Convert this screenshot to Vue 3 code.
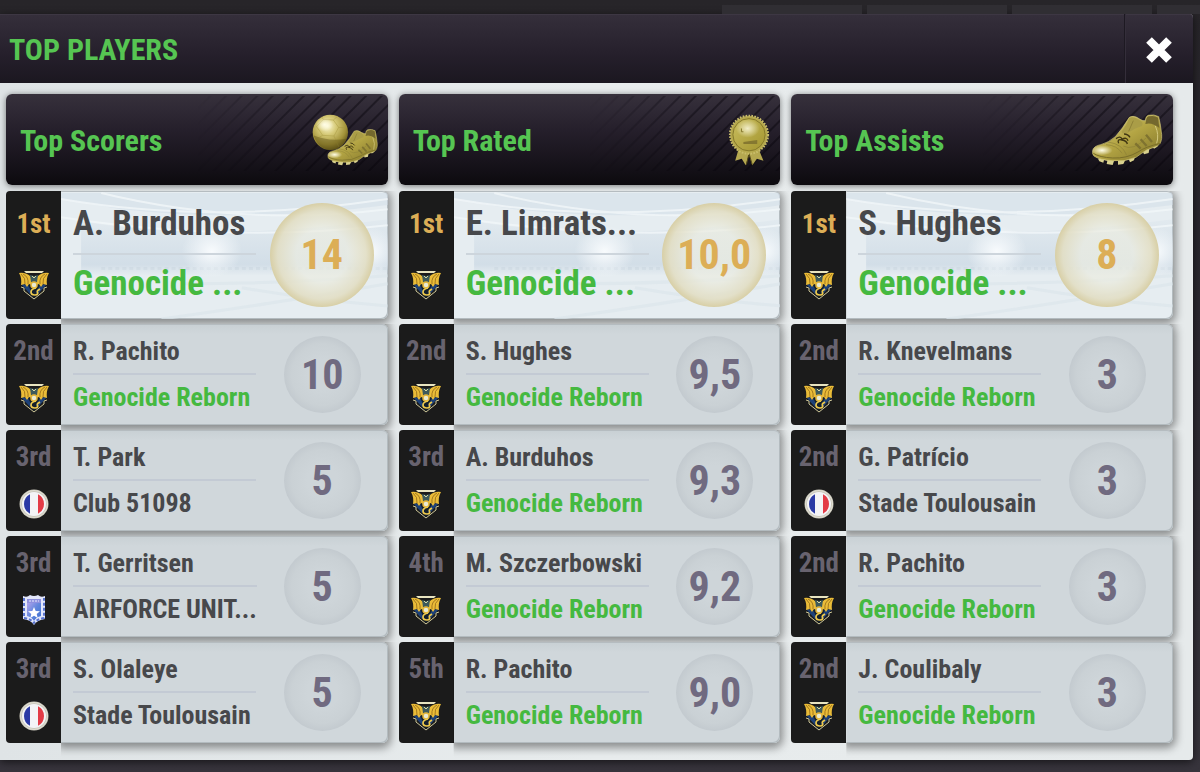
<script setup>
const reborn = 'Genocide Reborn'

const boards = [
  {
    title: 'Top Scorers',
    icon: 'ball',
    players: [
      { rank: '1st', name: 'A. Burduhos', club: 'Genocide ...', crest: 'dragon', own: true, value: '14' },
      { rank: '2nd', name: 'R. Pachito', club: reborn, crest: 'dragon', own: true, value: '10' },
      { rank: '3rd', name: 'T. Park', club: 'Club 51098', crest: 'france', value: '5' },
      { rank: '3rd', name: 'T. Gerritsen', club: 'AIRFORCE UNIT...', crest: 'star', value: '5' },
      { rank: '3rd', name: 'S. Olaleye', club: 'Stade Toulousain', crest: 'france', value: '5' }
    ]
  },
  {
    title: 'Top Rated',
    icon: 'medal',
    players: [
      { rank: '1st', name: 'E. Limrats...', club: 'Genocide ...', crest: 'dragon', own: true, value: '10,0' },
      { rank: '2nd', name: 'S. Hughes', club: reborn, crest: 'dragon', own: true, value: '9,5' },
      { rank: '3rd', name: 'A. Burduhos', club: reborn, crest: 'dragon', own: true, value: '9,3' },
      { rank: '4th', name: 'M. Szczerbowski', club: reborn, crest: 'dragon', own: true, value: '9,2' },
      { rank: '5th', name: 'R. Pachito', club: reborn, crest: 'dragon', own: true, value: '9,0' }
    ]
  },
  {
    title: 'Top Assists',
    icon: 'boot',
    players: [
      { rank: '1st', name: 'S. Hughes', club: 'Genocide ...', crest: 'dragon', own: true, value: '8' },
      { rank: '2nd', name: 'R. Knevelmans', club: reborn, crest: 'dragon', own: true, value: '3' },
      { rank: '2nd', name: 'G. Patrício', club: 'Stade Toulousain', crest: 'france', value: '3' },
      { rank: '2nd', name: 'R. Pachito', club: reborn, crest: 'dragon', own: true, value: '3' },
      { rank: '2nd', name: 'J. Coulibaly', club: reborn, crest: 'dragon', own: true, value: '3' }
    ]
  }
]
</script>

<template>
  <div class="page">
    <svg class="defs" aria-hidden="true">
      <defs>
        <linearGradient id="gold" x1="0" y1="0" x2="1" y2="1">
          <stop offset="0" stop-color="#d8cf83" />
          <stop offset="0.5" stop-color="#b3a443" />
          <stop offset="1" stop-color="#7d7128" />
        </linearGradient>
        <linearGradient id="medalGold" x1="0" y1="0" x2="1" y2="1">
          <stop offset="0" stop-color="#c9bd5e" />
          <stop offset="1" stop-color="#a3952f" />
        </linearGradient>
        <radialGradient id="ballGold" cx="0.42" cy="0.32" r="0.7">
          <stop offset="0" stop-color="#fbf7d2" />
          <stop offset="0.35" stop-color="#d6ca78" />
          <stop offset="0.75" stop-color="#a29238" />
          <stop offset="1" stop-color="#5f5418" />
        </radialGradient>
        <radialGradient id="shine">
          <stop offset="0" stop-color="#fffde6" />
          <stop offset="1" stop-color="#fffde6" stop-opacity="0" />
        </radialGradient>
        <radialGradient id="floodlight">
          <stop offset="0" stop-color="#f8fbfd" />
          <stop offset="1" stop-color="#f8fbfd" stop-opacity="0" />
        </radialGradient>
        <linearGradient id="stand" x1="0" y1="0" x2="0" y2="1">
          <stop offset="0" stop-color="#cddae5" stop-opacity="0.2" />
          <stop offset="0.8" stop-color="#cddae5" />
          <stop offset="1" stop-color="#cddae5" stop-opacity="0" />
        </linearGradient>
        <linearGradient id="starFill" x1="0" y1="0" x2="1" y2="1">
          <stop offset="0" stop-color="#b5a4ee" />
          <stop offset="0.5" stop-color="#5f86dc" />
          <stop offset="1" stop-color="#3f6fd0" />
        </linearGradient>

        <symbol id="boot" viewBox="64 54 214 156">
          <path d="M84 188l4 8 12 4 2-8 10 2-2 10 18 3 4-12 12 0 0 11 16-2 6-12 10-3 4 10 12-6 4-14 22-14 4 10 14-4 2-12 10-6 4 5 10-6 4-14z" fill="#d9d18f" />
          <path d="M68 165Q70 150 92 146Q116 140 136 122Q158 98 178 64Q192 56 210 70Q220 76 226 74Q227 60 235 58Q252 54 266 62Q272 86 275 116Q277 140 262 150L230 162Q214 172 198 184Q166 198 128 194Q88 192 72 180Q66 174 68 165Z" fill="url(#gold)" stroke="#d5ca7d" stroke-width="2" />
          <path d="M178 66Q190 60 208 72Q222 80 216 90Q196 96 172 112Q158 116 154 108Q170 88 178 66Z" fill="#aa9d47" />
          <path d="M228 75Q229 61 238 61Q252 57 264 65L268 96Q246 78 226 84Z" fill="#74682e" />
          <path d="M190 74l-14 32" stroke="#8f8237" stroke-width="3" />
          <path d="M70 172Q88 184 128 186Q170 188 204 168Q226 152 272 142" fill="none" stroke="#7a6e2a" stroke-width="3" />
          <path d="M108 146Q142 148 156 172M114 138Q158 144 170 178M160 150Q190 166 228 126" fill="none" stroke="#8c8036" stroke-width="2" />
          <path d="M138 128q14-10 18 2 14-8 18 4M146 142q-6-14 10-10 14 2 16 12M162 114q12 0 18 10" fill="none" stroke="#3f3613" stroke-width="4" />
          <path d="M196 142l16 16M212 130l18 20M228 116l18 22" stroke="#7f7330" stroke-width="7" />
          <path d="M256 90q12 26 4 52" fill="none" stroke="#d3c97e" stroke-width="3" />
          <ellipse cx="96" cy="163" rx="32" ry="15" fill="url(#shine)" />
        </symbol>

        <symbol id="dragon" viewBox="0 0 30 30">
          <path d="M5 1h20l-2 2H7z" fill="#e8e4c0" />
          <path d="M2 13l13 15 13-15z" fill="#14202c" />
          <path d="M2 14l7 1 4 8-2 1zM28 14l-7 1-4 8 2 1z" fill="#1d4178" />
          <path d="M2 17l3 1v3l10 8 10-8v-3l3-1" fill="none" stroke="#cfc899" stroke-width="1" />
          <path d="M0 3Q7 2 12 7l1 8-3-1-2 3-2-3-4 1Q3 8 0 3zM30 3Q23 2 18 7l-1 8 3-1 2 3 2-3 4 1Q27 8 30 3z" fill="#eabc38" />
          <path d="M2 4q5 4 4 10M4 4q6 3 5 10M28 4q-5 4-4 10M26 4q-6 3-5 10" fill="none" stroke="#8f6718" stroke-width="0.8" />
          <path d="M11 5l4 1 4-1-1 7-3 2-3-2z" fill="#3d5a5c" />
          <path d="M13 6l2 2 2-2" fill="none" stroke="#d8d6a0" />
          <circle cx="15" cy="15" r="3" fill="#e9ead2" stroke="#e2b53b" stroke-width="1.5" />
          <path d="M17 18q-5 1-5 4t4 3 2-4M18 21l3-2" fill="none" stroke="#efca4c" stroke-width="1.7" />
        </symbol>

        <symbol id="france" viewBox="0 0 30 30">
          <circle cx="15" cy="15" r="14.5" fill="#c9c7bb" />
          <circle cx="15" cy="15" r="12" fill="#f4f4f6" />
          <path d="M11 5.200A11 11 0 0 0 11 24.800z" fill="#2b3aa5" />
          <path d="M19 5.200A11 11 0 0 1 19 24.800z" fill="#e33b46" />
          <circle cx="15" cy="15" r="13.500" fill="none" stroke="#e2e0d3" />
        </symbol>

        <symbol id="star" viewBox="0 0 30 30">
          <path d="M4 1q4 2 7-1 4 2 8 0 3 3 7 1v23q-8 1-11 6-3-5-11-6z" fill="#e3e7fb" />
          <path d="M5 3v20q7 1 10 5 3-4 10-5V3" fill="none" stroke="#5873cf" stroke-width="2" stroke-dasharray="3 2" />
          <path d="M8 7h14v14q-5 1-7 5-2-4-7-5z" fill="url(#starFill)" />
          <path d="M8 4h14v4H8z" fill="#8f91df" />
          <path d="M10 6h10" stroke="#e9edff" stroke-dasharray="2 1" />
          <path d="M15 12l1.700 4 4.300.300-3.300 2.700 1 4-3.700-2.200-3.700 2.200 1-4-3.300-2.700 4.300-.300z" fill="#fff" />
        </symbol>
      </defs>
    </svg>

    <div class="backdrop-tabs"><i></i><i></i><i></i><i></i></div>

    <section class="dialog" role="dialog" aria-labelledby="dialog-title">
      <header class="titlebar">
        <h1 id="dialog-title">TOP PLAYERS</h1>
        <button class="close" type="button" aria-label="Close">
          <svg width="28" height="28" viewBox="0 0 28 28"><path d="M4 4l20 20M24 4L4 24" stroke="#fff" stroke-width="8" /></svg>
        </button>
      </header>

      <div class="boards">
        <section v-for="board in boards" :key="board.title" class="board">
          <header class="board-head">
            <h2>{{ board.title }}</h2>
            <svg v-if="board.icon === 'ball'" class="award" width="66" height="52" viewBox="66 54 198 156">
              <circle cx="121" cy="109" r="53" fill="url(#ballGold)" />
              <path d="M80 92l20-22 30 2 16 22-14 26-34-2zM100 70l-6-8M130 72l14-12M146 94l26 2M132 120l14 32M98 118l-22 12" fill="none" stroke="#a6983f" stroke-width="2" opacity="0.7" />
              <path d="M70 118Q118 138 170 128Q154 162 122 162Q86 160 70 118Z" fill="#574c13" opacity="0.4" />
              <ellipse cx="104" cy="86" rx="26" ry="20" fill="url(#shine)" />
              <use href="#boot" x="111" y="98" width="153" height="112" />
            </svg>
            <svg v-else-if="board.icon === 'medal'" class="award" width="42" height="52" viewBox="86 54 124 158">
              <path d="M116 162l-10 34 20-6 12 20 10-34 10 34 14-20 20 6-16-38z" fill="#b5a850" />
              <path d="M148 174l-8 34M148 174l10 34" stroke="#564b17" stroke-width="3" />
              <circle cx="148" cy="117" r="57" fill="#b5a84c" />
              <circle cx="148" cy="117" r="58" fill="none" stroke="#c9bd6a" stroke-width="6" stroke-dasharray="5 4" />
              <circle cx="148" cy="117" r="49" fill="url(#medalGold)" stroke="#85792b" stroke-width="3" />
              <ellipse cx="144" cy="98" rx="36" ry="28" fill="url(#shine)" opacity="0.8" />
              <path d="M125 98v10h6" fill="none" stroke="#84772c" stroke-width="3" />
              <path d="M131 139l42-6v12h-42z" fill="#857830" />
            </svg>
            <svg v-else class="award" width="72" height="52"><use href="#boot" width="72" height="52" /></svg>
          </header>

          <ol class="players">
            <li v-for="(p, i) in board.players" :key="i" class="player" :class="{ leader: i === 0 }">
              <div class="place">
                <span class="rank">{{ p.rank }}</span>
                <svg class="crest" width="30" height="30" aria-hidden="true"><use :href="'#' + p.crest" width="30" height="30" /></svg>
              </div>
              <div class="card">
                <svg v-if="i === 0" class="stadium" viewBox="0 0 325 127" preserveAspectRatio="none" aria-hidden="true">
                  <path d="M0 2H325V14Q190 32 60 18L0 8z" fill="#d3e0ea" opacity="0.6" />
                  <path d="M20 30Q150 52 325 28V84H20z" fill="url(#stand)" opacity="0.8" />
                  <path d="M0 8Q150 34 325 8M40 2Q180 36 325 18M0 26Q170 52 325 34" fill="none" stroke="#f1f6f9" stroke-width="2" opacity="0.8" />
                  <path d="M40 77H325" stroke="#b4c3cf" stroke-width="3" stroke-dasharray="4 3" opacity="0.2" />
                  <path d="M100 127Q210 112 325 92M180 96Q250 108 325 114M120 92Q220 92 325 84" fill="none" stroke="#dbe5eb" stroke-width="3" opacity="0.7" />
                  <ellipse cx="150" cy="60" rx="30" ry="26" fill="url(#floodlight)" />
                  <ellipse cx="308" cy="60" rx="26" ry="24" fill="url(#floodlight)" />
                </svg>
                <div class="who">
                  <div class="name">{{ p.name }}</div>
                  <div class="club" :class="{ own: p.own }">{{ p.club }}</div>
                </div>
                <div class="score"><span>{{ p.value }}</span></div>
              </div>
            </li>
          </ol>
        </section>
      </div>
    </section>
  </div>
</template>

<style>
body {
  background: #333038;
}
</style>

<style scoped>
.page {
  box-sizing: border-box;
  min-height: 100vh;
  padding: 5px 7px 12px 0;
  background: linear-gradient(#272529, #2b2830 40%, #37343c);
  font-family: "Roboto Condensed", "Liberation Sans Narrow", "Arial Narrow", "Liberation Sans", sans-serif;
  font-weight: 700;
}
.defs {
  position: absolute;
  width: 0;
  height: 0;
}
.backdrop-tabs {
  display: flex;
  gap: 5px;
  height: 9px;
  margin-left: 60%;
  margin-right: -7px;
  padding-left: 6px;
  overflow: hidden;
}
.backdrop-tabs i {
  flex: 0 0 140px;
  background: #302e33;
}
.dialog {
  border-radius: 0 4px 4px 0;
  background: linear-gradient(90deg, #dfe4e6, #e8eced 50%, #e6eaeb);
  box-shadow: 0 2px 8px rgba(0, 0, 0, 0.6);
}
.titlebar {
  display: flex;
  justify-content: space-between;
  height: 69px;
  border-radius: 0 4px 0 0;
  background: linear-gradient(#352f3b, #251f2b 60%, #1b1720);
  box-shadow: inset 0 1px #3d3743;
}
h1,
h2 {
  margin: 0;
  color: #56c552;
}
h1 {
  padding-left: 9px;
  font-size: 30px;
  line-height: 71px;
}
.close {
  display: grid;
  place-items: center;
  width: 69px;
  padding: 3px 0 0;
  border: 0;
  border-left: 1px solid #1d1922;
  background: none;
  box-shadow: inset 1px 0 #342e3a;
}
.boards {
  display: grid;
  grid-template-columns: repeat(3, minmax(0, 1fr));
  gap: 11px;
  padding: 11px 20px 17px 6px;
}
.board-head {
  position: relative;
  display: flex;
  align-items: center;
  justify-content: space-between;
  height: 91px;
  margin-bottom: 6px;
  padding: 0 10px 0 14px;
  box-sizing: border-box;
  border-radius: 6px;
  background: linear-gradient(#37313c, #251f2b 40%, #17131b 75%, #0c0a0e);
  box-shadow: 0 1px 6px rgba(0, 0, 0, 0.5);
}
.board-head::before {
  content: "";
  position: absolute;
  inset: 2px 0 14px 50%;
  background: repeating-linear-gradient(135deg, transparent 0 8px, rgba(8, 5, 12, 0.45) 9px 10px, transparent 11px);
  mask-image: linear-gradient(90deg, transparent, #000 60%);
}
h2 {
  padding-top: 2px;
  font-size: 30px;
  line-height: 36px;
}
.award {
  position: relative;
}
.players {
  display: grid;
  gap: 5px;
  margin: 0;
  padding: 0;
  list-style: none;
}
.player {
  display: flex;
  height: 101px;
}
.leader {
  height: 128px;
}
.place {
  display: flex;
  flex-direction: column;
  align-items: center;
  justify-content: space-between;
  flex: 0 0 55px;
  box-sizing: border-box;
  padding: 11px 0 12px;
  border-radius: 4px 0 0 4px;
  background: #1b1b1b;
}
.leader .place {
  padding: 17px 0 19px;
}
.rank {
  color: #68636f;
  font-size: 27px;
  line-height: 32px;
}
.leader .rank {
  color: #dcae56;
}
.card {
  position: relative;
  display: flex;
  align-items: center;
  justify-content: space-between;
  flex: 1;
  min-width: 0;
  box-sizing: border-box;
  padding: 0 27px 0 12px;
  border-radius: 0 6px 6px 0;
  background: linear-gradient(#c8d0d4, #d0d7db 10%, #d0d7db);
  box-shadow: inset -1px -1px #b3bbbf, inset 0 1px #b5bcc0, 0 2px 8px 3px rgba(0, 0, 0, 0.4);
  clip-path: inset(0 -14px -17px 0);
}
.leader .card {
  padding-right: 14px;
  background: #e6edf1;
}
.stadium {
  position: absolute;
  inset: 0;
  width: 100%;
  height: 100%;
  border-radius: 0 6px 6px 0;
}
.who {
  position: relative;
  flex: 0 0 183px;
  padding-bottom: 2px;
  color: #47484b;
  font-size: 26px;
  line-height: 44px;
  white-space: nowrap;
}
.name {
  border-bottom: 2px solid #c3cad4;
}
.leader .who {
  font-size: 35px;
  line-height: 58px;
}
.leader .name {
  border-color: #cdd5dc;
}
.own {
  color: #45b940;
}
.score {
  position: relative;
  display: grid;
  place-items: center;
  flex: none;
  width: 77px;
  height: 77px;
  border-radius: 50%;
  background: radial-gradient(circle closest-side, #ced5d9 40%, #cad1d5 80%, #c3cacf);
  color: #706a80;
  font-size: 42px;
  line-height: 48px;
}
.leader .score {
  width: 104px;
  height: 104px;
  background: radial-gradient(circle closest-side, rgba(235, 236, 224, 0.7) 50%, rgba(226, 222, 196, 0.9) 85%, #d8cfa6);
  color: #dcae56;
}
</style>
